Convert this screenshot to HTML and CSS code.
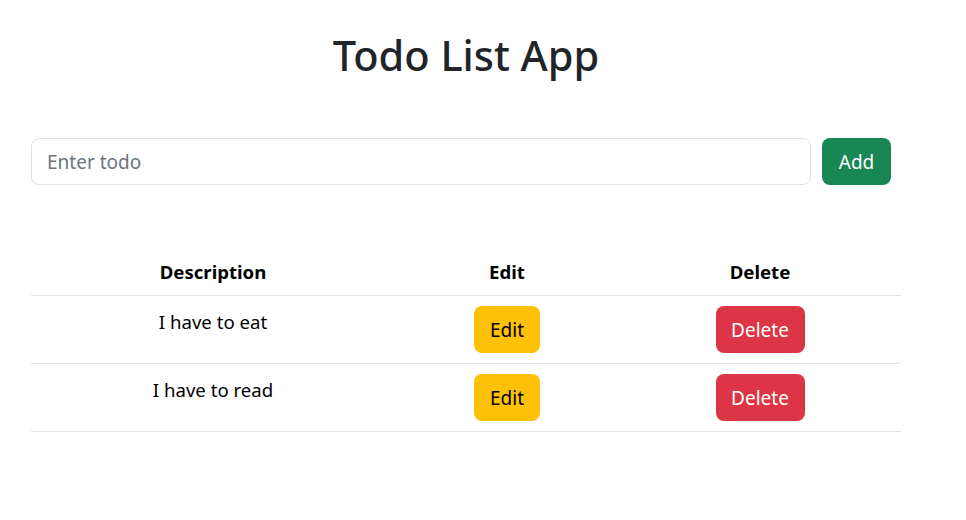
FILE: index.html
```html
<!DOCTYPE html>
<html lang="en">
<head>
<meta charset="utf-8">
<title>Todo List App</title>
<link rel="stylesheet" href="styles.css">
</head>
<body>
<div class="app">
  <h1 class="title">Todo List App</h1>
  <form class="add-form">
    <input class="todo-input" type="text" placeholder="Enter todo">
    <button type="button" class="btn btn-add">Add</button>
  </form>
  <table class="todo-table">
    <thead>
      <tr>
        <th class="col-desc">Description</th>
        <th class="col-edit">Edit</th>
        <th class="col-del">Delete</th>
      </tr>
    </thead>
    <tbody>
      <tr>
        <td>I have to eat</td>
        <td><button type="button" class="btn btn-edit">Edit</button></td>
        <td><button type="button" class="btn btn-delete">Delete</button></td>
      </tr>
      <tr>
        <td>I have to read</td>
        <td><button type="button" class="btn btn-edit">Edit</button></td>
        <td><button type="button" class="btn btn-delete">Delete</button></td>
      </tr>
    </tbody>
  </table>
</div>
</body>
</html>
```
FILE: styles.css
```css
* { box-sizing: border-box; }
body {
  margin: 0;
  background: #fff;
  font-family: "Noto Sans", "Open Sans", sans-serif;
  color: #212529;
}
.app {
  width: 870px;
  margin-left: 31px;
}
.title {
  margin: 31px 0 0;
  font-size: 41.5px;
  line-height: 48px;
  font-weight: 500;
  text-align: center;
  color: #212529;
}
.add-form {
  display: flex;
  align-items: stretch;
  margin-top: 59px;
  height: 47px;
}
.todo-input {
  width: 780px;
  height: 47px;
  padding: 0 15px;
  font-family: inherit;
  font-size: 19px;
  color: #212529;
  border: 1px solid #dee2e6;
  border-radius: 8px;
  outline: none;
}
.todo-input::placeholder { color: #6c757d; }
.btn {
  height: 47px;
  padding: 0 16px;
  font-family: inherit;
  font-size: 19px;
  border: 1px solid transparent;
  border-radius: 8px;
  cursor: pointer;
}
.btn-add {
  margin-left: 11px;
  width: 69px;
  padding: 0;
  background: #198754;
  color: #fff;
}
.todo-table {
  margin-top: 64px;
  width: 870px;
  border-collapse: collapse;
  color: #000;
  font-size: 18.6px;
}
.col-desc { width: 364px; }
.col-edit { width: 224px; }
.col-del { width: 282px; }
.todo-table th {
  padding: 8px;
  line-height: 30px;
  font-weight: 700;
  text-align: center;
  border-bottom: 1px solid #dee2e6;
}
.todo-table td {
  padding: 10px 8px;
  line-height: 30px;
  text-align: center;
  vertical-align: top;
  border-bottom: 1px solid #dee2e6;
}
.todo-table td:first-child { padding-top: 11px; }
.todo-table td .btn { display: block; margin: 0 auto; }
.btn-edit {
  width: 66px;
  padding: 0;
  background: #ffc107;
  color: #000;
}
.btn-delete {
  width: 89px;
  padding: 0;
  background: #dc3545;
  color: #fff;
}
```
